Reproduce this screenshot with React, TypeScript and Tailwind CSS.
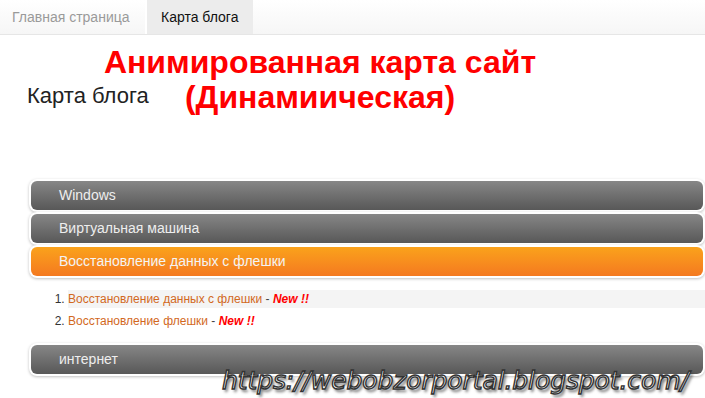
const sections = [
  { title: 'Windows', active: false },
  { title: 'Виртуальная машина', active: false },
  { title: 'Восстановление данных с флешки', active: true },
];

const posts = ['Восстановление данных с флешки', 'Восстановление флешки'];

const Bar = ({ title, active }: { title: string; active: boolean }) => (
  <div className="rounded-[8px] bg-white p-[2px] shadow-[0_1px_3px_rgba(0,0,0,0.25)]">
    <div
      className={
        active
          ? 'flex h-[29px] items-center rounded-[6px] bg-gradient-to-b from-[#faa21b] to-[#f47920] pl-[28px] text-[14px] text-[#f4f4f4]'
          : 'flex h-[29px] items-center rounded-[6px] bg-gradient-to-b from-[#878787] to-[#585858] pl-[28px] text-[14px] text-[#eeeeee]'
      }
    >
      {title}
    </div>
  </div>
);

export default function App() {
  return (
    <div className="relative h-[398px] w-[705px] overflow-hidden bg-white font-['Liberation_Sans',Arial,sans-serif]">
      <nav className="flex h-[35px] border-b border-[#e6e6e6] bg-gradient-to-b from-white to-[#f6f6f6] text-[14px]">
        <div className="flex w-[147px] items-center border-r-2 border-white pl-[12px] text-[#9a9a9a]">Главная страница</div>
        <div className="flex w-[106px] items-center bg-[#ececec] pl-[14px] text-[#111]">Карта блога</div>
      </nav>

      <header className="pt-[10px]">
        <div className="w-[640px] text-center text-[32px] font-bold leading-[35px] text-[#ff0000]">
          Анимированная карта сайт
          <br />
          (Динамиическая)
        </div>
        <h2 className="ml-[27px] mt-[-32px] w-[140px] text-[22px] leading-[26px] text-[#222]">Карта блога</h2>
      </header>

      <section className="ml-[29px] mt-[70px] flex flex-col">
        {sections.map((s) => (
          <Bar key={s.title} title={s.title} active={s.active} />
        ))}
      </section>

      <ol className="ml-[55px] mt-[12px] flex list-decimal flex-col text-[12px] text-[#333]">
        {posts.map((p, i) => (
          <li key={p} className={i === 0 ? 'ml-[13px] h-[18px] bg-[#f4f4f4] leading-[18px]' : 'ml-[13px] mt-[4px] h-[18px] leading-[18px]'}>
            <span className="text-[#d2691e]">{p}</span>
            <span className="text-[#444]"> - </span>
            <span className="font-bold italic text-[#ff0000]">New !!</span>
          </li>
        ))}
      </ol>

      <div className="ml-[29px] mt-[13px]">
        <Bar title="интернет" active={false} />
      </div>

      <div className="absolute left-[222px] top-[362px] font-['DejaVu_Sans',sans-serif] text-[25px] italic tracking-[-0.1px] text-white [-webkit-text-stroke:1.4px_#333] [text-shadow:2px_3px_3px_rgba(0,0,0,0.6)]">
        https://webobzorportal.blogspot.com/
      </div>
    </div>
  );
}
